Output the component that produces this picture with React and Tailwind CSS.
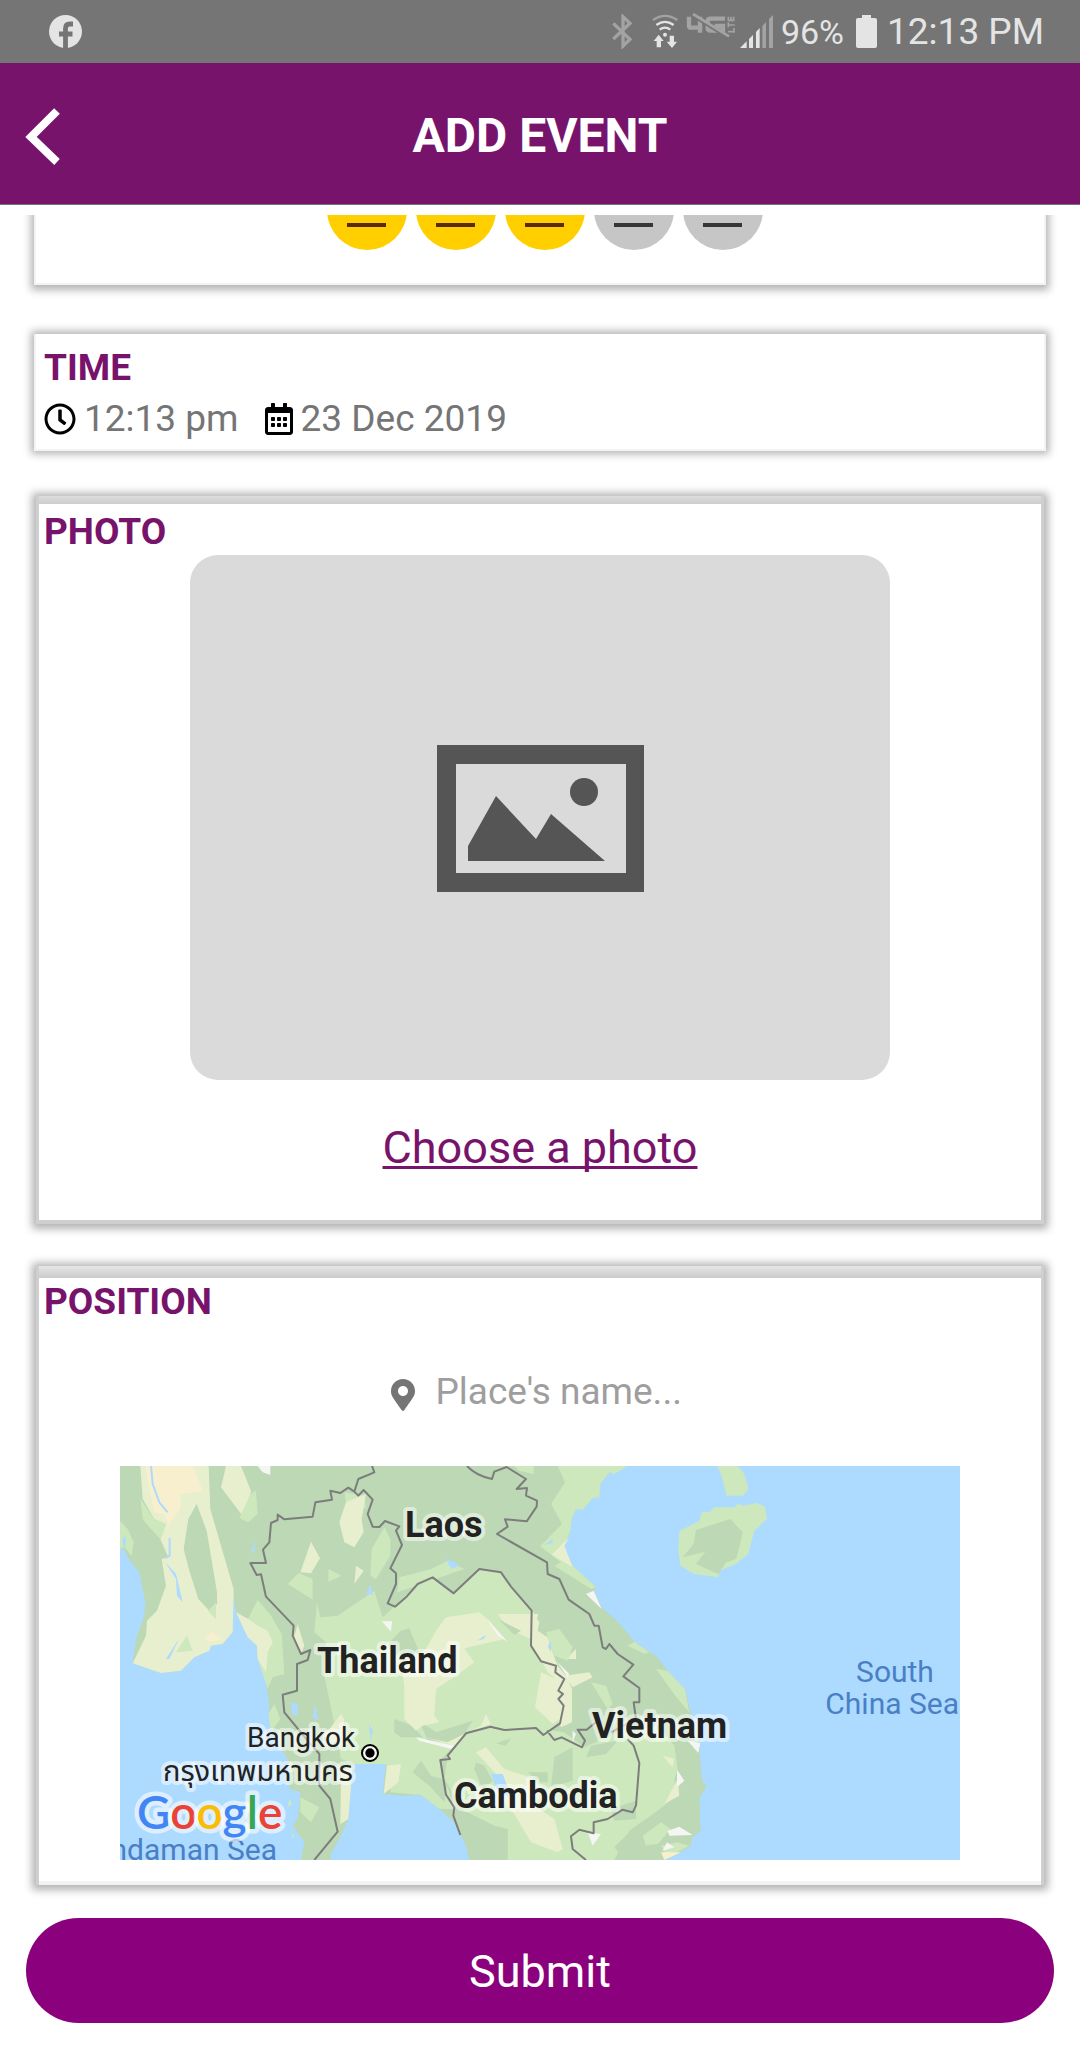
import React from "react";
import { FaRegClock, FaRegCalendarAlt, FaMapMarkerAlt } from "react-icons/fa";

const RATINGS = [1, 2, 3, 4, 5];
const SCORE = 3;

const DARK = "#bcd8b4";
const LIGHT = "#cde8bc";
const CREAM = "#e8efcf";
const SAND = "#f8efcf";
const PALE = "#f5f5f3";
const WATER = "#addaff";

function FacebookIcon() {
  return (
    <svg width="33" height="33" viewBox="0 0 33 33" aria-label="Facebook">
      <circle cx="16.5" cy="16.5" r="16.5" fill="#e4e4e4" />
      <path d="M24 9h-3.200q-4.300 0-4.300 4.500V33M10 19h13.500" fill="none" stroke="#757575" strokeWidth="4.800" />
    </svg>
  );
}

function BluetoothIcon() {
  return (
    <svg width="20" height="35" viewBox="33 42 60 105" aria-label="Bluetooth">
      <path d="M37 70l50 48-21 20V50l21 20-50 47" fill="none" stroke="#a3a3a3" strokeWidth="10" />
    </svg>
  );
}

function WifiIcon() {
  return (
    <svg width="26" height="35" viewBox="151 40 78 105" aria-label="Wi-Fi">
      <g fill="none" strokeWidth="7">
        <path d="M154 58q36-25 73 0" stroke="#a3a3a3" />
        <path d="M164 73q26-19 52 0M174 87q16-12 32 0" stroke="#e4e4e4" />
      </g>
      <circle cx="190" cy="102" r="6" fill="#e4e4e4" />
      <path d="M171 102l15 19h-8v19h-13v-19h-9zM211 142l15-19h-9v-18h-13v18h-9z" fill="#e4e4e4" />
    </svg>
  );
}

function LteIcon() {
  return (
    <svg width="50" height="27" viewBox="257 34 150 81" aria-label="4G LTE off">
      <g fill="none" stroke="#a3a3a3">
        <path d="M266 48v27q0 6 6 6h34M299 48v48" strokeWidth="13" />
        <path d="M374 54h-44q-8 0-8 8v20q0 8 8 8h38V76h-25" strokeWidth="13" />
        <path d="M278 44l108 67" stroke="#757575" strokeWidth="12" />
        <path d="M278 40l108 67" strokeWidth="8" />
        <path d="M383 93h18M401 96V82M384 80V65M384 73h19M400 61V48M392 61V48M384 61V48M384 59h18" strokeWidth="5" />
      </g>
    </svg>
  );
}

function SignalIcon() {
  return (
    <svg width="33" height="33" viewBox="0 0 99 99" aria-label="Signal">
      <path d="M0 99l20-20v20zM27 72l12-12v39H27zM48 51l11-12v60H48z" fill="#e4e4e4" />
      <path d="M67 33l11-12v78H67zM87 12L99 0v99H87z" fill="#a3a3a3" />
    </svg>
  );
}

function StatusBar() {
  return (
    <div className="flex h-[63px] items-center justify-between bg-[#757575] pl-[49px] pr-9 text-[#e4e4e4]">
      <FacebookIcon />
      <div className="flex items-center">
        <BluetoothIcon />
        <span className="ml-5"><WifiIcon /></span>
        <span className="mb-3 ml-2"><LteIcon /></span>
        <span className="ml-1"><SignalIcon /></span>
        <span className="ml-2 text-[34px] leading-none">96%</span>
        <svg className="ml-3" width="21" height="33" viewBox="0 0 21 33" aria-label="Battery">
          <path d="M6 0h9v3h4q2 0 2 2v26q0 2-2 2H2q-2 0-2-2V5q0-2 2-2h4z" fill="#e4e4e4" />
        </svg>
        <span className="ml-2.5 text-[37px] leading-none">12:13 PM</span>
      </div>
    </div>
  );
}

function Header() {
  return (
    <header className="grid h-[142px] grid-cols-[1fr_auto_1fr] items-center border-b border-[#757575] bg-[#78136c] px-6 pt-1">
      <button type="button" aria-label="Back" className="justify-self-start">
        <svg width="36" height="58" viewBox="0 0 36 58">
          <path d="M33 4L7 30L33 55" fill="none" stroke="#fff" strokeWidth="8" />
        </svg>
      </button>
      <h1 className="text-[48px] font-bold leading-[58px] text-white">ADD EVENT</h1>
    </header>
  );
}

function Face({ value, active }) {
  return (
    <button type="button" aria-label={`Rate ${value}`} aria-pressed={active}>
      <svg width="80" height="80" viewBox="0 0 80 80">
        <circle cx="40" cy="40" r="40" fill={active ? "#ffcf00" : "#c6c6c6"} />
        <path d="M20 55h39" stroke={active ? "#5b2a12" : "#363636"} strokeWidth="4" />
      </svg>
    </button>
  );
}

function Title({ children }) {
  return <h2 className="text-[37px] font-bold leading-[44px] text-[#78136c]">{children}</h2>;
}

function MapView() {
  return (
    <svg className="block h-auto w-full" viewBox="0 0 840 394" role="img" aria-label="Map of Southeast Asia">
      <rect width="840" height="394" fill={WATER} />
      <g transform="scale(0.33333) translate(-27 -21)">
        {/* mainland */}
        <path fill={DARK} d="M27 21H1550L1515 27 1510 45 1495 40 1468 75 1465 115 1445 118 1415 152 1395 150 1382 180 1378 215 1360 260 1363 280 1385 320 1455 385 1450 400 1472 445 1522 490 1570 548 1635 590 1670 635 1722 690 1740 765 1765 850 1767 900 1773 965 1787 980 1765 1020 1768 1115 1743 1135 1740 1160 1710 1180 1660 1203H1075L1070 1170 1030 1090 985 1050 930 1008 870 1010 815 1005 825 915 780 908 730 915 720 970 712 1080 690 1130 660 1185V1203H570L580 1150 545 1100 560 1080 568 1000 535 990 530 900 505 860 480 800 470 700 460 640 440 600 438 560 410 535 400 510 375 462 367 405 365 520 335 555 300 560 295 575 250 595 210 635 150 642 65 613 75 540 100 470 103 430 85 340 60 310 40 275 27 265z" />
        {/* western lowlands */}
        <path fill={CREAM} d="M88 21H293L298 150 330 260 368 390 365 520 335 555 300 560 295 575 250 595 210 635 150 642 65 613 105 530 108 485 138 455 165 380 152 300 172 295 148 240 165 195 130 180 95 120zM345 21H390L420 95 402 180 330 85z" />
        <path fill={SAND} d="M103 21H245L275 95 208 105V150L172 198 160 165 130 160 115 90zM280 540L300 520 332 540 300 548z" />
        <path fill={DARK} d="M257 135L287 215 318 400V435L295 455 262 420 235 335 218 270 232 180z" />
        <path fill={LIGHT} d="M435 95L440 165 412 190 385 178 418 105zM27 185L50 210 68 250 62 290 40 265 27 270zM88 120L130 180 165 195 148 240 115 205 95 180zM195 580L228 530 245 575zM290 455L315 430V480z" />
        {/* northern patches */}
        <path fill={LIGHT} d="M700 100L760 110 765 150 735 130 705 130zM820 205L838 240 838 290 795 360 778 350 782 270zM652 330L692 350 652 368zM530 375L563 342 605 360 605 422zM855 430L865 355 960 330 1010 305 1060 330 860 400z" />
        <path fill={CREAM} d="M705 130L765 105 752 180 758 220 730 265 700 250 685 190zM600 248L627 298 600 343 568 340zM735 320L758 335 730 375z" />
        <path fill={PALE} d="M440 21H478V48L455 40zM1470 21H1500L1465 36zM1425 405L1448 395 1472 450z" />
        {/* tenasserim strip */}
        <path fill={LIGHT} d="M412 478L440 422 480 470 512 525 520 645 485 655 470 690 440 600 438 560 410 520zM490 735L508 780 480 820 472 765z" />
        <path fill={CREAM} d="M375 460L412 480 440 500 470 515 485 550 470 580 465 640 440 600 438 560 410 535zM560 495L580 560 570 585 548 540z" />
        {/* Thai plain */}
        <path fill={LIGHT} d="M618 430L628 475 680 470 790 395 815 475 850 443 920 375 965 355 1028 403 1105 330 1170 340 1262 455 1275 560 1330 630 1360 660 1350 790 1290 830 1140 805 1070 820 985 905 1030 1050 985 1050 930 1008 840 1000 825 915 735 915 690 900 665 770 640 650 645 550 610 520z" />
        <path fill={DARK} d="M825 560L870 515 895 508 925 580 870 600zM850 780L905 800 935 835 870 835 850 820zM925 785L975 820 1085 785 1060 825 1010 850 950 845zM905 940L930 905 960 950 1010 965 1000 1030 960 985z" />
        <path fill={CREAM} d="M945 570L975 515 1005 475 1105 460 1135 485 1180 540 1060 568 1090 610 1050 640 975 690 970 770 985 790 935 800 915 815 880 780V680L870 610 925 585zM1160 465H1282L1260 540 1195 510zM640 830L690 765 700 780 690 835 660 860zM940 835L1010 850 1110 800 1125 765 1140 795 1080 815 1030 860zM828 920L870 915 862 970 818 1005zM690 935L725 920 712 1080 688 1095z" />
        <path fill={DARK} d="M1165 483L1230 515 1210 528z" />
        <path fill={PALE} d="M812 487H843L840 518zM1128 480L1190 548 1160 530zM915 835L1030 860 1020 870 925 845z" />
        <path fill={LIGHT} d="M568 1015L625 1045 600 1090 568 1060z" />
        {/* Vietnam north and coast */}
        <path fill={LIGHT} d="M1340 21H1550L1510 45 1495 40 1468 75 1465 115 1445 118 1415 152 1395 150 1382 180 1378 215 1360 260 1363 280 1385 320 1455 385 1440 390 1330 320 1350 310 1287 262 1353 195 1320 135 1362 70zM1210 21H1268V45L1225 35z" />
        <path fill={CREAM} d="M1375 235L1360 260 1385 325 1322 287z" />
        {/* eastern Thailand and Laos panhandle */}
        <path fill={CREAM} d="M1265 455L1285 490 1280 515 1310 535 1325 580 1340 620 1365 650 1383 690V790L1350 805 1340 780 1345 715 1335 660 1310 640 1260 550zM1290 640L1335 660 1350 700 1345 780 1325 795 1272 745zM1360 650L1435 640 1445 655 1385 685zM1395 570V600H1365z" />
        <path fill={LIGHT} d="M1305 520L1345 510 1385 565 1370 605 1330 590zM1440 670L1485 680 1505 735 1490 750zM1550 560L1570 548 1615 580 1600 585zM1635 630L1670 635 1722 690 1735 760 1700 720z" />
        {/* Cambodia */}
        <path fill={LIGHT} d="M1010 890L1070 820 1140 805 1290 810 1360 820 1420 865 1520 820 1640 800 1690 860 1700 930 1690 960 1695 1010 1640 1055 1555 1115 1510 1203H1180L1150 1100 1050 1050 1030 1010 1000 960z" />
        <path fill={DARK} d="M1330 895L1385 865V965L1320 985zM1440 860L1520 845 1485 885 1425 895zM1250 940H1310V970H1290zM1155 853L1200 838 1185 860zM1095 910L1120 920 1145 965 1115 990 1090 930zM1500 1050L1575 1025V1080L1510 1085zM1040 1050L1150 1100 1190 1110V1203H1075zM1510 1165L1560 1115 1695 1020 1765 1030 1768 1115 1660 1203H1540z" />
        <path fill={CREAM} d="M1095 880L1125 865 1180 930 1245 950 1300 990 1270 1040 1330 1080 1355 1170 1340 1180 1260 1150 1210 1065 1150 1000 1160 950zM1655 890L1690 900 1685 925zM1660 1035L1700 960 1705 1010z" />
        <path fill={LIGHT} d="M1595 1130L1650 1090 1680 1110 1640 1155 1605 1160zM1650 1160L1700 1150 1735 1160 1670 1195z" />
        <path fill={PALE} d="M1670 1115L1705 1103 1745 1128 1675 1130zM1655 1175L1668 1150 1690 1165zM1430 1120L1470 1125 1445 1160zM1730 845L1768 852 1762 882zM1698 932L1720 965 1698 985zM1338 608L1375 645 1370 655zM1385 815L1395 825 1385 850z" />
        <path fill={SAND} d="M1650 1180L1710 1180 1660 1203z" />
        {/* islands */}
        <path fill={LIGHT} d="M1818 21H1880L1900 45 1913 90 1895 110H1847L1830 45zM1772 160L1798 158 1808 145 1870 145 1880 135 1900 140 1935 132 1962 143 1968 180 1930 215 1912 285 1875 315 1825 335 1822 355 1750 345 1708 320 1702 270 1705 217 1765 185zM535 1020L543 1035 530 1045zM543 1118L550 1130 545 1140z" />
        <path fill={DARK} d="M1755 213L1858 180 1895 220 1885 265 1875 300 1845 310 1822 345 1755 315 1783 278 1715 295 1748 255z" />
        {/* lakes and rivers */}
        <path fill={WATER} d="M1002 297L1048 318 1022 330zM765 405L778 375 785 408zM418 283L435 245 430 280zM540 730L562 735 558 772 543 765zM605 775L613 735 622 785zM165 600L205 538 175 600zM1098 545L1125 528 1118 540zM1140 945L1175 945 1190 985 1215 1020 1160 1000zM773 795L785 815 780 845zM1300 258L1325 240V252zM1310 562L1320 545V580zM162 308L195 345 215 430 198 410 195 360zM33 240L45 230 42 275z" />
        <path fill="none" stroke={WATER} strokeWidth="6" d="M120 21L125 75 145 130 170 160M176 237V290L165 297" />
        {/* borders */}
        <path fill="none" stroke="#7d7d7d" strokeWidth="6" strokeLinejoin="round" d="M783 21L790 40 742 60 730 98 712 86 688 102 658 95 663 122 613 130 605 173 520 181 500 167V183L480 192 475 250 456 272 465 312H418L437 348 450 346 465 413 548 500 545 530 570 585 598 573 590 603 558 615V695L515 707 520 760 590 845 625 885V980L658 1020 680 1118 610 1203M730 98L742 110 758 93 785 122 770 165 785 203 805 204 822 186 865 202 855 215 873 258 838 328 855 343V375L830 433 852 443 885 415 920 375 965 355 1028 403 1105 330 1170 340 1200 383 1262 455 1260 560 1290 607 1335 620 1333 640 1360 660 1342 695 1356 705 1342 720 1358 740 1347 793 1297 828 1275 807 1180 813 1138 803 1065 823 1010 890 1017 900 988 903 1005 1007 1030 1045 1027 1070 1048 1128M1068 21Q1095 50 1143 60L1150 38 1187 24 1245 60 1217 90 1248 87 1245 110 1278 125 1277 143 1247 187 1182 181 1190 203 1158 225 1308 310 1310 345 1345 360 1373 422 1435 465 1450 500H1463L1475 565 1485 570 1495 555 1520 585 1567 617 1537 652 1585 687V730H1568L1575 780 1500 820M1308 815L1330 843 1352 835 1413 865 1422 845 1400 812H1427L1460 785M1550 840L1568 860 1585 912 1575 1040 1565 1060 1535 1052 1490 1080 1448 1090V1123L1405 1112 1380 1132 1385 1170 1425 1203" />
        <circle cx="777" cy="882" r="24" fill={PALE} stroke="#000" strokeWidth="6" />
        <circle cx="777" cy="882" r="14" fill="#000" />
      </g>
      <g className="[paint-order:stroke]" stroke="#ffffff" strokeOpacity="0.5" strokeWidth="8" strokeLinejoin="round" fill="#222">
        <g fontSize="36" fontWeight="700">
          <text x="285" y="71">Laos</text>
          <text x="197" y="207">Thailand</text>
          <text x="472" y="272">Vietnam</text>
          <text x="334" y="342">Cambodia</text>
        </g>
        <text x="127" y="281" fontSize="28">Bangkok</text>
        <text x="43" y="315" fontSize="29" fontFamily="Roboto, 'Noto Sans Thai', 'Noto Sans', sans-serif">กรุงเทพมหานคร</text>
      </g>
      <g fill="#4a7fc5" fontSize="30">
        <text x="775" y="216" textAnchor="middle">South</text>
        <text x="839" y="248" textAnchor="end">China Sea</text>
        <text x="157" y="394" textAnchor="end">ndaman Sea</text>
      </g>
      <text x="17" y="363" fontSize="46" fontFamily="Lato, sans-serif" fontWeight="600" stroke="#ffffff" strokeOpacity="0.6" strokeWidth="9" strokeLinejoin="round" className="[paint-order:stroke]">
        <tspan fill="#4285f4">G</tspan><tspan fill="#ea4335">o</tspan><tspan fill="#fbbc05">o</tspan><tspan fill="#4285f4">g</tspan><tspan fill="#34a853">l</tspan><tspan fill="#ea4335">e</tspan>
      </text>
    </svg>
  );
}

export default function App() {
  return (
    <div className="min-h-screen bg-white pb-6 font-[Roboto,sans-serif]">
      <StatusBar />
      <Header />
      <main className="mt-[10px] overflow-hidden">
        <section aria-label="Rating" className="mx-[34px] border-2 border-t-0 border-[#f3f3f3] bg-white pb-[33px] shadow-[0_2px_8px_3px_rgba(0,0,0,0.3)]">
          <div className="-mt-[45px] flex justify-center gap-[9px] pl-[9px] [&_svg]:block">
            {RATINGS.map((n) => (
              <Face key={n} value={n} active={n <= SCORE} />
            ))}
          </div>
        </section>

        <section className="mx-[34px] mt-[49px] border-2 border-t-0 border-[#f3f3f3] bg-white px-2 pb-2 pt-3 shadow-[0_0_8px_3px_rgba(0,0,0,0.3)]">
          <Title>TIME</Title>
          <div className="mt-[7px] flex items-center text-[37px] leading-[44px] text-[#757575]">
            <FaRegClock size={32} color="#000" />
            <span className="ml-2">12:13 pm</span>
            <FaRegCalendarAlt className="ml-6" size={32} color="#000" />
            <span className="ml-1.5">23 Dec 2019</span>
          </div>
        </section>

        <section className="mx-9 mt-[45px] border-x-[3px] border-b-4 border-[#cfcfcf] bg-white shadow-[0_1px_8px_4px_rgba(0,0,0,0.3)]">
          <div className="h-2 bg-gradient-to-b from-[#dcdcdc] to-[#cdcdcd]" />
          <div className="px-[5px] pb-[46px] pt-1.5">
            <Title>PHOTO</Title>
            <div className="mx-auto mt-px flex aspect-[4/3] w-full max-w-[700px] items-center justify-center rounded-[28px] bg-[#dadada] pt-0.5">
              <svg width="207" height="147" viewBox="0 0 207 147" aria-label="No photo">
                <path d="M0 0h207v147H0zM19 19v109h170V19z" fill="#555" fillRule="evenodd" />
                <circle cx="147" cy="47" r="14" fill="#555" />
                <path d="M31 116v-15l28-50 40 43 15-25 54 47z" fill="#555" />
              </svg>
            </div>
            <div className="mt-[42px] text-center">
              <a href="#photo" className="text-[45px] leading-[52px] text-[#78136c] underline decoration-[3px] underline-offset-[3px] [text-decoration-skip-ink:none]">
                Choose a photo
              </a>
            </div>
          </div>
        </section>

        <section className="mx-9 mt-[42px] border-x-[3px] border-[#cfcfcf] bg-white shadow-[0_1px_8px_4px_rgba(0,0,0,0.3)]">
          <div className="h-3 bg-gradient-to-b from-[#e6e6e6] to-[#cbcbcb]" />
          <div className="border-b-4 border-[#f3f3f3] pb-[21px] pl-[5px] pr-1.5 pt-0.5">
            <Title>POSITION</Title>
            <div className="mt-[46px] flex items-center justify-center">
              <FaMapMarkerAlt className="mt-1.5" size={32} color="#757575" />
              <input
                aria-label="Place's name"
                placeholder="Place's name..."
                className="ml-[17px] w-[257px] bg-transparent text-[37px] leading-[44px] text-[#757575] outline-none placeholder:text-[#9e9e9e]"
              />
            </div>
            <div className="mx-auto mt-[52px] w-full max-w-[840px]">
              <MapView />
            </div>
          </div>
        </section>

        <div className="mt-[33px] px-[26px]">
          <button type="button" className="h-[105px] w-full rounded-full bg-[#8b007c] pt-0.5 text-[45px] leading-[52px] text-white">
            Submit
          </button>
        </div>
      </main>
    </div>
  );
}
